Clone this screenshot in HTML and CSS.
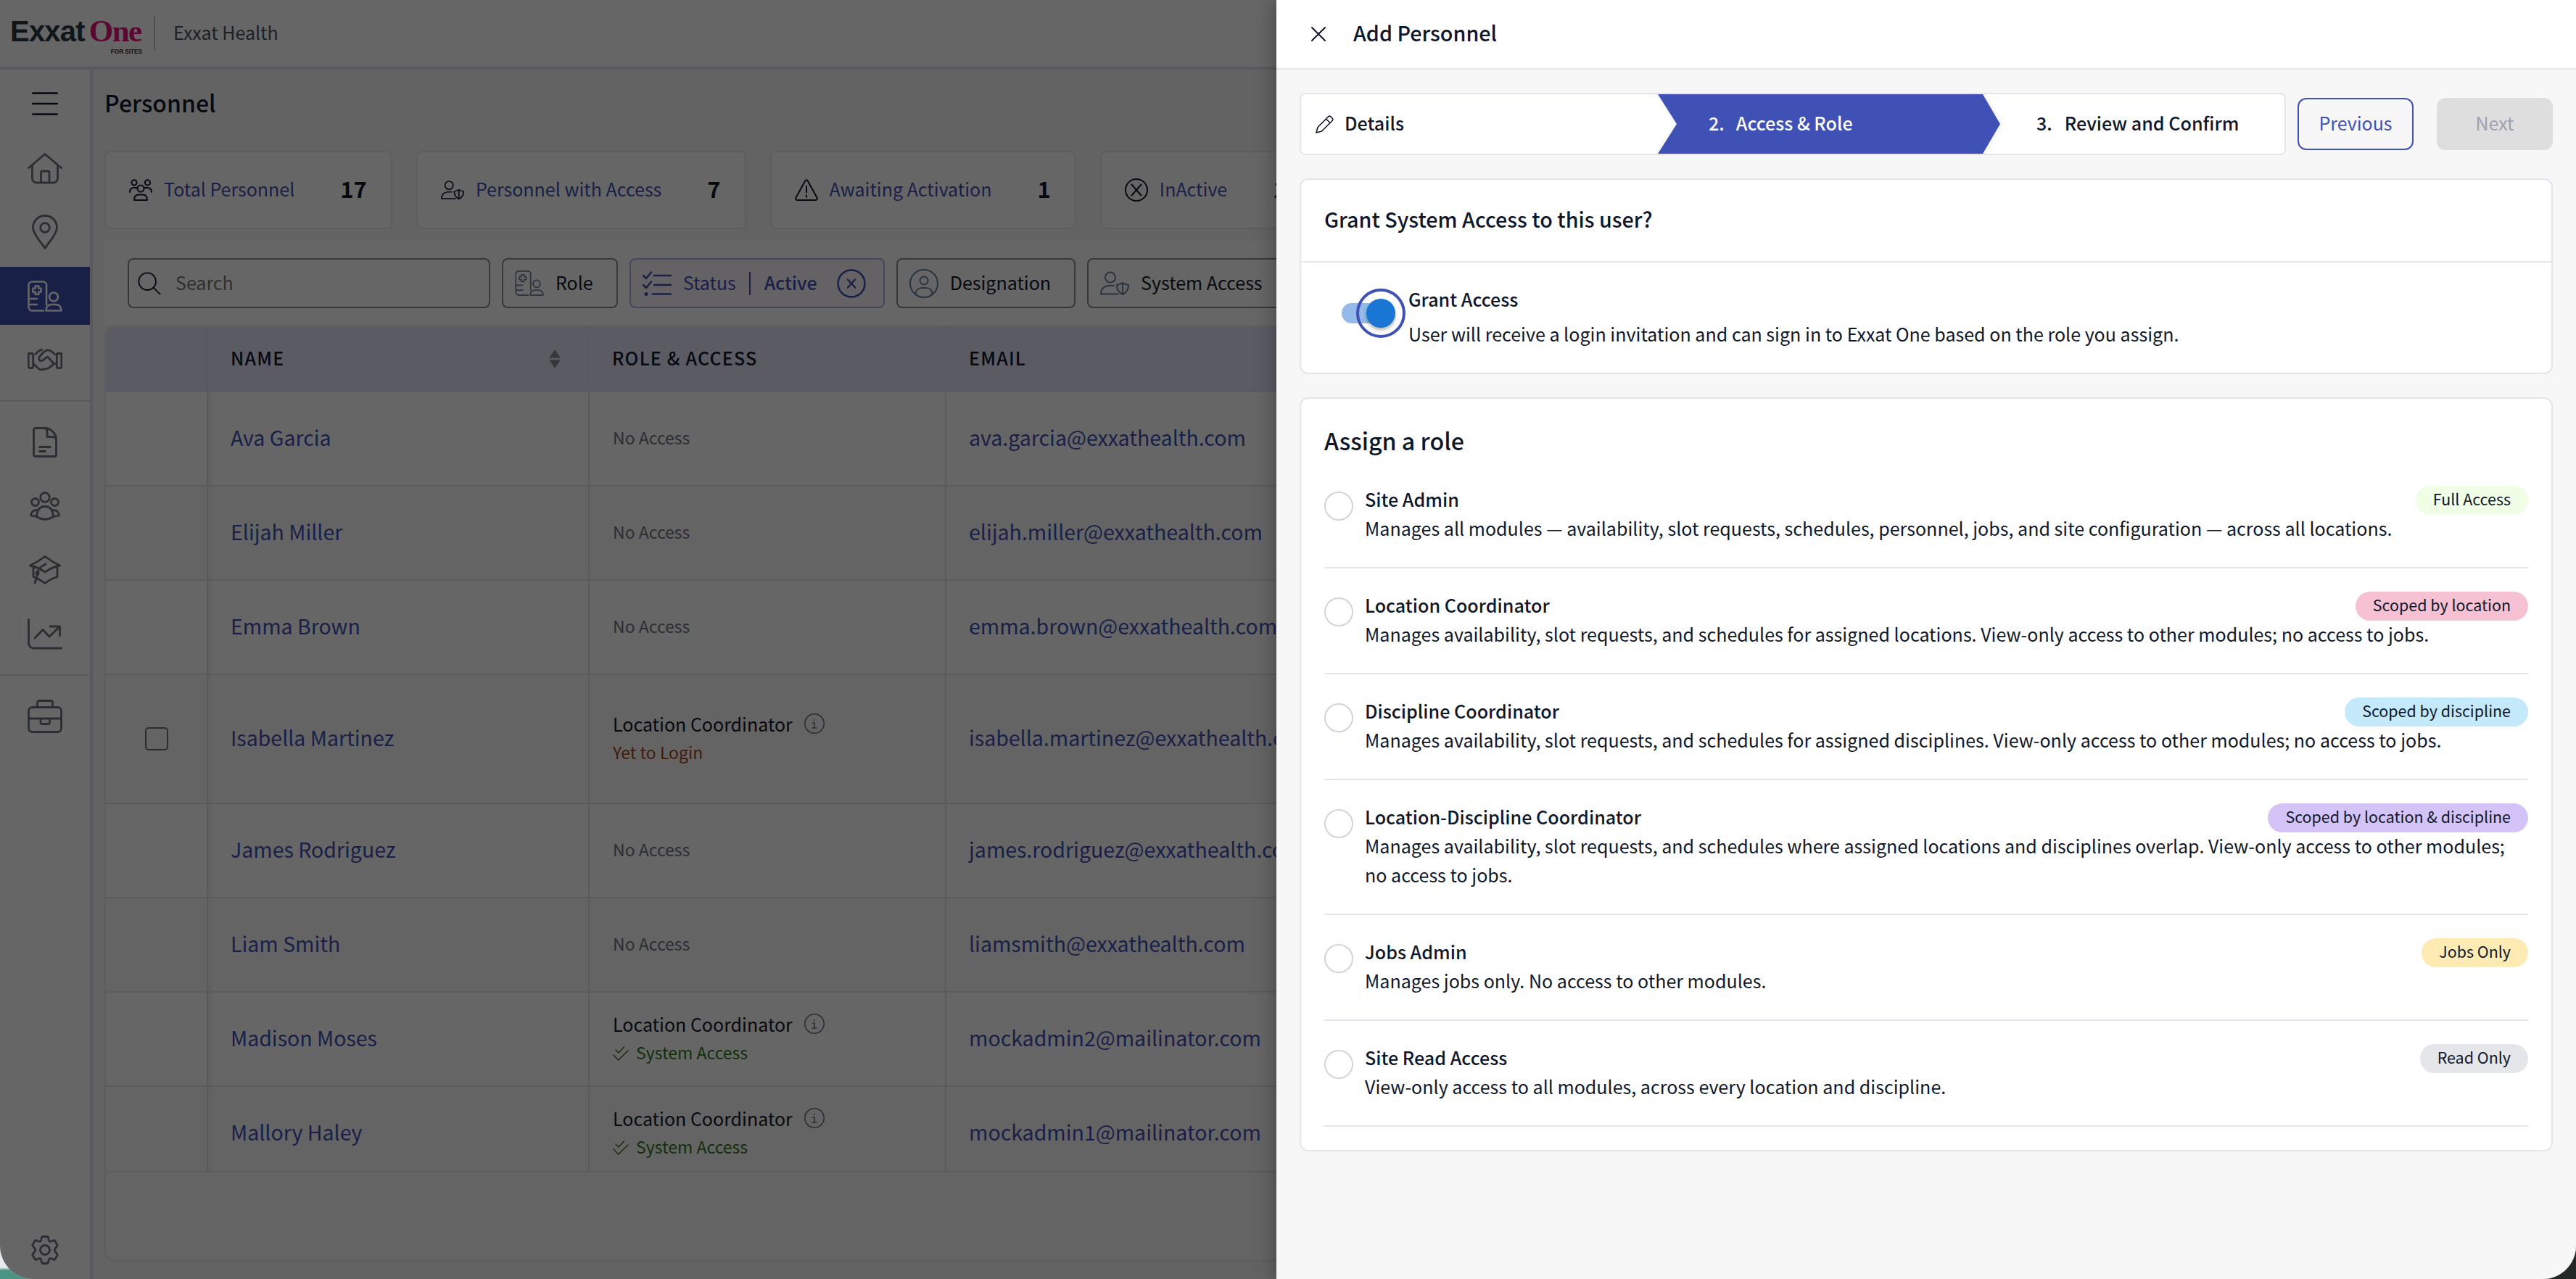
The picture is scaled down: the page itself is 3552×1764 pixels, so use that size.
FILE: index.html
```html
<!DOCTYPE html>
<html lang="en">
<head>
	<meta charset="utf-8">
	<meta name="viewport" content="width=device-width, initial-scale=1">
	<title>Exxat One - Add Personnel</title>
	<link rel="stylesheet" href="styles.css">
</head>
<body>
<svg class="sprite" xmlns="http://www.w3.org/2000/svg">
	<symbol id="i-badge" viewBox="0 0 48 43">
		<path d="M26 33V6a4.500 4.500 0 0 0-4.500-4.500h-15A5 5 0 0 0 1.500 6v30.500a5 5 0 0 0 5 5H22M1.500 25H13M1.500 33H13"/>
		<path d="M10.700 7.500h4.600v3.300h3.300v4.800h-3.300v3.300h-4.600v-3.300H7.400v-4.800h3.300z"/>
		<circle cx="36" cy="22.500" r="6"/>
		<path d="M25.500 41.500c0-6 3.500-8.500 8-8.500h5c4.500 0 8 2.500 8 8.500z"/>
	</symbol>
	<symbol id="i-shield-user" viewBox="0 0 40 32">
		<circle cx="14" cy="8" r="7"/>
		<path d="M19 19.500h-7C5 20 1 24 1 31h24"/>
		<path d="M31 15.500c3 2 5 2.500 8 3 0 6-2.500 10.500-8 13-5.500-2.500-8-7-8-13 3-.5 5-1 8-3zv16"/>
	</symbol>
	<symbol id="i-x-circle" viewBox="0 0 40 40">
		<circle cx="20" cy="20" r="18.500"/>
		<path d="m15 14.500 10 11m0-11-10 11"/>
	</symbol>
	<symbol id="i-info" viewBox="0 0 28 28">
		<circle cx="14" cy="14" r="13.200"/>
		<path d="M11.500 13H14v7m-3 0h6M13.800 8.500v1"/>
	</symbol>
	<symbol id="i-checks" viewBox="0 0 22 20">
		<path d="m4 5 4 4 7.500-8M1 12l6.500 7L21 6"/>
	</symbol>
</svg>

<div class="window">
	<header class="topbar">
		<div class="logo">
			<div class="logo-name"><span class="logo-exxat">Exxat</span><span class="logo-one">One</span></div>
			<div class="logo-sub">FOR SITES</div>
		</div>
		<span class="topbar-sep"></span>
		<span class="org">Exxat Health</span>
	</header>

	<div class="shell">
		<nav class="side">
			<a class="side-item menu"><svg width="36" height="32" viewBox="0 0 36 32"><path d="M1 1.500h34M1 16h34M1 30.500h34"/></svg></a>
			<a class="side-item"><svg width="48" height="43" viewBox="0 0 48 43"><path d="M1.500 20.500 24 1.500l22.500 19M6.500 17v18a6 6 0 0 0 6 6h23a6 6 0 0 0 6-6V17M18.500 41V27a2 2 0 0 1 2-2h7.500a2 2 0 0 1 2 2v14"/></svg></a>
			<a class="side-item"><svg width="36" height="48" viewBox="0 0 36 48"><path d="M18 46.500C16 42 1.500 28 1.500 17.500a16.500 16 0 0 1 33 0C34.500 28 20 42 18 46.500z"/><circle cx="18" cy="18" r="6.300"/></svg></a>
			<a class="side-item active"><svg width="48" height="43"><use href="#i-badge"/></svg></a>
			<a class="side-item"><svg width="48" height="31" viewBox="0 0 48 31"><path d="M1.200 6.500h5a1.500 1.500 0 0 1 1.500 1.500v17a1.500 1.500 0 0 1-1.500 1.500h-3A2 2 0 0 1 1.200 24.500zM46.800 6.500h-5a1.500 1.500 0 0 0-1.500 1.500v17a1.500 1.500 0 0 0 1.500 1.500h3a2 2 0 0 0 2-2zM11 7.500c3-3 5-6 9-6M37.500 8c-3-4-7-6.500-11-6-3 1-8 6-10.500 10-1 3 1 5.500 4 4.500 3-1 4.500-4.500 7.500-5.500l7.500 8c1 2 0 4-2.500 5-2 1-3 3.500-5.500 3-2 1.500-4 1.500-5 1-4 2-6 .5-8-1.500l-6-6M35 20.500h5"/></svg></a>
			<hr>
			<a class="side-item"><svg width="34" height="42" viewBox="0 0 34 42"><path d="M4 1.500h13C25 1.500 32.500 9 32.500 17v21.500a2 2 0 0 1-2 2H4a2.500 2.500 0 0 1-2.500-2V4A2.500 2.500 0 0 1 4 1.500zM17 1.500c3 1 3.500 4 3 12h6c4 0 6 1 6.500 3.500M9.500 27.500h15M9.500 33.500h8"/></svg></a>
			<a class="side-item"><svg width="42" height="40" viewBox="0 0 42 40"><circle cx="21" cy="8" r="6.300"/><circle cx="7.500" cy="14.500" r="5"/><circle cx="34.500" cy="14.500" r="5"/><path d="M9.500 34.500C10 25 14 20.500 21 20.500S32 25 32.500 34.500c-7 5-16 5-23 0zM12 25.500c-7-1-10 3-10.500 7.500 2.500 1 5 1 8 1M30 25.500c7-1 10 3 10.500 7.500-2.500 1-5 1-8 1"/></svg></a>
			<a class="side-item"><svg width="44" height="40" viewBox="0 0 44 40"><path d="M22 1.500C16 6 8 11 1.500 14c8 1.500 14 4.500 20.500 9 6.500-4.500 12.500-7.500 20.500-9C36 11 28 6 22 1.500zM6 16.500v13c6 2 11 5 16 9 5-4 11-7 17-9v-13M23 12c-6 3-10 6-11 10l-1 7-3 9"/><circle class="dot" cx="11.500" cy="24.500" r="3"/></svg></a>
			<a class="side-item"><svg width="48" height="43" viewBox="0 0 48 43"><path d="M1.500 1v33a7 7 0 0 0 7 7H47M10 27l11-11.500 9 9.500L44 11.500M31 11h13.500v12.500"/></svg></a>
			<hr>
			<a class="side-item"><svg width="48" height="46" viewBox="0 0 48 46"><rect x="1.500" y="10.500" width="45" height="34" rx="5"/><path d="M13.500 10V4a2.500 2.500 0 0 1 2.500-2.500h16A2.500 2.500 0 0 1 34.500 4v6M1.500 26h45M18 26v5.500a2 2 0 0 0 2 2h8.500a2 2 0 0 0 2-2V26"/></svg></a>
			<a class="side-item gear"><svg width="38" height="40" viewBox="0 0 38 40"><circle cx="19" cy="20" r="6.500"/><path d="M15.500 1.500h7c1.500 0 1.200 6 3 6.800 1.800.9 6-2.800 7-1.400l3.700 6c.8 1.500-4 4.500-4 7.100s4.800 5.600 4 7.100l-3.700 6c-1 1.400-5.200-2.300-7-1.400-1.800.8-1.500 6.800-3 6.800h-7c-1.500 0-1.200-6-3-6.800-1.800-.9-6 2.800-7 1.400l-3.700-6c-.8-1.500 4-4.500 4-7.100s-4.800-5.600-4-7.100l3.700-6c1-1.400 5.200 2.300 7 1.400 1.800-.8 1.500-6.800 3-6.800z"/></svg></a>
		</nav>

		<main class="page">
			<h1>Personnel</h1>
			<div class="stats">
				<div class="stat">
					<svg width="32" height="30" viewBox="0 0 32 30"><circle cx="7" cy="4.800" r="3.600"/><circle cx="25.500" cy="4.800" r="3.600"/><circle cx="16" cy="13" r="4.600"/><path d="M1 18c0-4 2-6 6-6h3M31 18c0-4-2-6-6-6h-3M7 29c0-5 2-7.500 6-7.500h6c4 0 6 2.500 6 7.500z"/></svg>
					<a>Total Personnel</a><b>17</b>
				</div>
				<div class="stat">
					<svg width="32" height="28"><use href="#i-shield-user"/></svg>
					<a>Personnel with Access</a><b>7</b>
				</div>
				<div class="stat">
					<svg width="32" height="30" viewBox="0 0 32 30"><path d="M14.500 2a2 2 0 0 1 3 0l13 23.500c1 2 0 3.500-2 3.500h-25c-2 0-3-1.500-2-3.500zM16 10v8.500M16 22.300v2.400"/></svg>
					<a>Awaiting Activation</a><b>1</b>
				</div>
				<div class="stat">
					<svg width="32" height="32" viewBox="0 0 32 32"><circle cx="16" cy="16" r="15"/><path d="m9.500 8.500 13 15m0-15-13 15"/></svg>
					<a>InActive</a><b>10</b>
				</div>
			</div>

			<div class="toolbar">
				<div class="search">
					<svg width="32" height="32" viewBox="0 0 34 34"><circle cx="14" cy="14" r="12.500"/><path d="m23 23 9.500 9.500"/></svg>
					<span>Search</span>
				</div>
				<div class="filter">
					<svg width="40" height="37"><use href="#i-badge"/></svg><span>Role</span>
				</div>
				<div class="filter on">
					<svg width="40" height="34" viewBox="0 0 40 34"><path d="m1 6 4 4 7-8.500M1 19l4 4 7-8.500M16 6h23M16 19h23M14 31.500h25"/><circle class="dot" cx="5" cy="31.500" r="2.500"/></svg>
					<span>Status</span><i></i><strong>Active</strong>
					<svg width="40" height="40"><use href="#i-x-circle"/></svg>
				</div>
				<div class="filter">
					<svg width="40" height="40" viewBox="0 0 40 40"><circle cx="20" cy="20" r="19"/><circle cx="20" cy="16" r="5.500"/><path d="M8.500 35c0-6 4-9 9-9h5c5 0 9 3 9 9"/></svg>
					<span>Designation</span>
				</div>
				<div class="filter">
					<svg width="40" height="33"><use href="#i-shield-user"/></svg><span>System Access</span>
				</div>
			</div>

			<div class="table">
				<div class="tr th">
					<div></div>
					<div>NAME<svg class="sort" width="16" height="26" viewBox="0 0 16 26"><path d="M8 1.500 14.500 11h-13zM8 24.500 14.500 15h-13z"/></svg></div>
					<div>ROLE &amp; ACCESS</div>
					<div>EMAIL</div>
				</div>
				<div class="tr"><div></div><div>Ava Garcia</div><div class="role"><span class="none">No Access</span></div><div>ava.garcia@exxathealth.com</div></div>
				<div class="tr alt"><div></div><div>Elijah Miller</div><div class="role"><span class="none">No Access</span></div><div>elijah.miller@exxathealth.com</div></div>
				<div class="tr"><div></div><div>Emma Brown</div><div class="role"><span class="none">No Access</span></div><div>emma.brown@exxathealth.com</div></div>
				<div class="tr alt tall">
					<div><span class="checkbox"></span></div><div>Isabella Martinez</div>
					<div class="role"><p>Location Coordinator<svg width="28" height="28"><use href="#i-info"/></svg></p><p class="pending">Yet to Login</p></div>
					<div>isabella.martinez@exxathealth.com</div>
				</div>
				<div class="tr"><div></div><div>James Rodriguez</div><div class="role"><span class="none">No Access</span></div><div>james.rodriguez@exxathealth.com</div></div>
				<div class="tr alt"><div></div><div>Liam Smith</div><div class="role"><span class="none">No Access</span></div><div>liamsmith@exxathealth.com</div></div>
				<div class="tr">
					<div></div><div>Madison Moses</div>
					<div class="role"><p>Location Coordinator<svg width="28" height="28"><use href="#i-info"/></svg></p><p class="granted"><svg width="22" height="20"><use href="#i-checks"/></svg>System Access</p></div>
					<div>mockadmin2@mailinator.com</div>
				</div>
				<div class="tr alt cut">
					<div></div><div>Mallory Haley</div>
					<div class="role"><p>Location Coordinator<svg width="28" height="28"><use href="#i-info"/></svg></p><p class="granted"><svg width="22" height="20"><use href="#i-checks"/></svg>System Access</p></div>
					<div>mockadmin1@mailinator.com</div>
				</div>
			</div>
		</main>
	</div>

	<div class="overlay"></div>

	<aside class="drawer">
		<div class="drawer-head">
			<svg width="20" height="20" viewBox="0 0 20 20"><path d="m1 1 18 18M19 1 1 19"/></svg>
			<h2>Add Personnel</h2>
		</div>
		<div class="drawer-body">
			<div class="steps-row">
				<div class="steps">
					<div class="step first">
						<svg width="25" height="25" viewBox="0 0 25 25"><path d="M1 24 3 16.500 17.500 2a2.500 2.500 0 0 1 3.500 0l2 2a2.500 2.500 0 0 1 0 3.500L8.500 22zM14.500 5l5.500 5.500"/></svg>
						<span>Details</span>
					</div>
					<div class="step-arrow"><div class="step current"><span>2.</span><span>Access &amp; Role</span></div></div>
					<div class="step last"><span>3.</span><span>Review and Confirm</span></div>
				</div>
				<button class="btn prev">Previous</button>
				<button class="btn next">Next</button>
			</div>

			<section class="card">
				<h2 class="card-head">Grant System Access to this user?</h2>
				<div class="grant">
					<span class="switch"><span class="thumb"></span></span>
					<div>
						<h4>Grant Access</h4>
						<p>User will receive a login invitation and can sign in to Exxat One based on the role you assign.</p>
					</div>
				</div>
			</section>

			<section class="card roles">
				<h3>Assign a role</h3>
				<div class="option">
					<span class="radio"></span>
					<div class="option-text">
						<div class="option-top"><h4>Site Admin</h4><span class="tag green">Full Access</span></div>
						<p>Manages all modules — availability, slot requests, schedules, personnel, jobs, and site configuration — across all locations.</p>
					</div>
				</div>
				<div class="option">
					<span class="radio"></span>
					<div class="option-text">
						<div class="option-top"><h4>Location Coordinator</h4><span class="tag pink">Scoped by location</span></div>
						<p>Manages availability, slot requests, and schedules for assigned locations. View-only access to other modules; no access to jobs.</p>
					</div>
				</div>
				<div class="option">
					<span class="radio"></span>
					<div class="option-text">
						<div class="option-top"><h4>Discipline Coordinator</h4><span class="tag blue">Scoped by discipline</span></div>
						<p>Manages availability, slot requests, and schedules for assigned disciplines. View-only access to other modules; no access to jobs.</p>
					</div>
				</div>
				<div class="option">
					<span class="radio"></span>
					<div class="option-text">
						<div class="option-top"><h4>Location-Discipline Coordinator</h4><span class="tag purple">Scoped by location &amp; discipline</span></div>
						<p>Manages availability, slot requests, and schedules where assigned locations and disciplines overlap. View-only access to other modules;<br>no access to jobs.</p>
					</div>
				</div>
				<div class="option">
					<span class="radio"></span>
					<div class="option-text">
						<div class="option-top"><h4>Jobs Admin</h4><span class="tag yellow">Jobs Only</span></div>
						<p>Manages jobs only. No access to other modules.</p>
					</div>
				</div>
				<div class="option">
					<span class="radio"></span>
					<div class="option-text">
						<div class="option-top"><h4>Site Read Access</h4><span class="tag grey">Read Only</span></div>
						<p>View-only access to all modules, across every location and discipline.</p>
					</div>
				</div>
			</section>
		</div>
	</aside>
</div>
</body>
</html>
```
FILE: styles.css
```css
*{box-sizing: border-box;}
body{margin: 0;font-family: 'Noto Sans CJK SC', sans-serif;font-size: 25px;color: #0f172a;background: linear-gradient(90deg, transparent 50%, #232927 50%), linear-gradient(#e6ebf0 1748px, #4c9584 1752px);}
h1, h2, h3, h4, p{margin: 0;font-weight: 500;}
svg{flex: none;fill: none;stroke: currentColor;stroke-width: 2;stroke-linecap: round;stroke-linejoin: round;}
.sprite{position: absolute;width: 0;height: 0;}
.dot{fill: currentColor;stroke: none;}
.window{position: relative;height: 1764px;overflow: hidden;border-radius: 0 0 46px 46px;background: #fff;}

.topbar{display: flex;align-items: center;height: 96px;border-bottom: 4px solid #e2e2ec;}
.logo{width: 196px;padding: 5px 0 0 14px;}
.logo-name{display: flex;gap: 6px;align-items: baseline;line-height: 44px;white-space: nowrap;}
.logo-exxat{font: bold 40px/44px 'Liberation Sans', sans-serif;letter-spacing: -0.8px;color: #2a3b45;}
.logo-one{font: bold 43px/44px 'Liberation Serif', serif;letter-spacing: -1.5px;color: #e5127a;}
.logo-sub{font: bold 8.2px/10px 'Liberation Sans', sans-serif;text-align: right;color: #222;margin-top: 2px;}
.topbar-sep{width: 2px;height: 46px;background: #c4c6d4;margin: 0 25px 0 16px;}
.org{padding-bottom: 4px;color: #475063;}

.shell{display: flex;height: 1668px;}
.side{display: flex;flex-direction: column;gap: 8px;width: 128px;border-right: 4px solid #e2e2ec;color: #6b7280;}
.side-item{display: flex;align-items: center;justify-content: center;height: 80px;}
.side-item svg{stroke-width: 2.8;}
.menu{height: 88px;padding-top: 5px;color: #0f172a;}
.menu svg{stroke-width: 2.4;}
.active{background: #3f51b5;color: #fff;}
.active svg{stroke-width: 2.6;}
.side hr{width: 100%;height: 2px;border: none;background: #e2e2ec;margin: 8px 0;}
.gear{margin-top: auto;}

.page{flex: 1;min-width: 0;overflow: hidden;padding: 0 0 0 16px;background: #f7f7f7;}
h1{font-size: 32px;line-height: 90px;margin-bottom: 22px;}
.stats{display: flex;gap: 33px;}
.stat{display: flex;align-items: center;flex: none;height: 108px;padding: 0 33px 0 32px;border: 2px solid #e9e9ec;border-radius: 8px;background: #fff;}
.stat a{margin-left: 16px;padding-bottom: 4px;color: #3f51b5;white-space: nowrap;}
.stat b{margin-left: 63px;padding-bottom: 6px;font-size: 31px;}

.toolbar{display: flex;gap: 16px;width: 3400px;height: 117px;margin-top: 16px;padding: 24px 32px;background: #fff;}
.search, .filter{display: flex;align-items: center;flex: none;height: 69px;padding: 0 14px 0 12px;border: 2px solid #8c8c8c;border-radius: 8px;}
.search{width: 500px;}
.search span{margin-left: 20px;padding-bottom: 3px;color: #757575;}
.filter{padding: 0 32px 0 16px;}
.filter svg{color: #64829f;}
.filter span{margin-left: 16px;padding-bottom: 4px;white-space: nowrap;}
.filter.on{padding-right: 24px;border-color: #a7b1de;background: #fdf5ff;color: #3f51b5;}
.filter.on svg{color: #3f51b5;stroke-width: 2.5;}
.filter.on i{width: 2px;height: 32px;margin: 0 19px 0 18px;background: #3f51b5;}
.filter.on strong{margin-right: 27px;padding-bottom: 4px;font-weight: 500;}

.table{width: 3400px;height: 1291px;overflow: hidden;border: 2px solid #e9e9ee;border-radius: 16px;background: #f9f9f9;}
.tr{display: grid;grid-template-columns: 141px 526px 492px 1fr;height: 130px;border-bottom: 2px solid #e4e4ea;background: #fff;color: #3f51b5;font-size: 28.500px;}
.tr > div{display: flex;align-items: center;padding: 0 32px 5px 31px;border-right: 2px solid #e4e4ea;}
.tr > div:first-child{justify-content: center;padding: 0;border-right-color: #dcdcea;}
.tr > div:nth-child(2){background: linear-gradient(90deg, #eeeef8, transparent 8px);}
.alt{background: #fbfbfb;}
.tall{height: 178px;}
.cut{height: 118px;overflow: hidden;}
.cut > div{height: 128px;}
.th{height: 90px;background: #e4e4fb;color: #0f172a;font-size: 25px;font-weight: 500;letter-spacing: 1.200px;}
.th > div:nth-child(2){background: none;}
.sort{margin: 5px 6px 0 auto;color: #8b8b92;}
.sort path{fill: currentColor;stroke-width: 1.500;}
.tr .role{flex-direction: column;align-items: flex-start;justify-content: center;padding-left: 32px;padding-bottom: 3px;font-size: 25px;line-height: 39px;}
.role p{display: flex;align-items: center;font-weight: 400;color: #0f172a;}
.role p svg{margin-left: 16px;color: #6b7280;stroke-width: 1.600;}
.none{font-size: 23px;color: #6b7280;}
.role .pending{font-size: 23px;color: #a8441f;}
.role .granted{font-size: 23px;color: #2e7518;}
.role .granted svg{margin: 4px 10px 0 0;color: inherit;stroke-width: 1.500;}
.checkbox{width: 32px;height: 32px;border: 2px solid #6b6b70;border-radius: 5px;}

.overlay{position: absolute;inset: 0;background: rgba(0, 0, 0, 0.6);}
.drawer{position: absolute;top: 0;right: 0;bottom: 0;width: 1792px;background: #f7f7f7;box-shadow: 0 0 28px rgba(0, 0, 0, 0.35);}
.drawer-head{display: flex;align-items: center;gap: 38px;height: 96px;padding-left: 48px;border-bottom: 2px solid #e5e5ea;background: #fff;}
.drawer h2{padding-bottom: 5px;font-size: 28.700px;}
.drawer h4{font-size: 25.100px;line-height: 40px;}
.drawer p{font-size: 25.050px;font-weight: 400;line-height: 40px;white-space: nowrap;}
.drawer-body{padding: 32px;}
.steps-row{display: flex;align-items: center;}
.steps{display: flex;width: 1360px;height: 86px;overflow: hidden;border: 2px solid #e5e5ec;border-radius: 8px;background: #fff;font-size: 25.100px;font-weight: 500;}
.step{display: flex;align-items: center;height: 100%;}
.step svg{stroke-width: 1.600;}
.step span{padding-bottom: 4px;white-space: pre;}
.first{width: 488px;padding-left: 20px;gap: 15px;}
.step-arrow{width: 481px;padding: 0 5px 0 4px;background: #f7f7f7;clip-path: polygon(0 0, calc(100% - 25px) 0, 100% 50%, calc(100% - 25px) 100%, 0 100%, 26px 50%);}
.current{gap: 16px;padding-left: 70px;background: #3f51b5;color: #fff;clip-path: polygon(0 0, calc(100% - 24px) 0, 100% 50%, calc(100% - 24px) 100%, 0 100%, 26px 50%);}
.last{gap: 17px;padding-left: 45px;}
.btn{width: 160px;height: 72px;padding: 0 0 4px;border: 2px solid #3f51b5;border-radius: 12px;background: none;color: #3f51b5;font: inherit;}
.prev{margin-left: 16px;}
.next{margin-left: 32px;border-color: #dedede;background: #dedede;color: #9ca3af;}

.card{margin-top: 32px;border: 2px solid #e5e5ec;border-radius: 12px;background: #fff;}
.card .card-head{display: flex;align-items: center;height: 114px;padding: 0 32px 5px;border-bottom: 2px solid #e5e5ec;}
.grant{display: flex;height: 152px;padding: 30px 32px 0 56px;}
.grant p{margin-top: 8px;}
.switch{position: relative;width: 58px;height: 28px;margin: 26px 34px 0 0;border-radius: 14px;background: #94bae9;}
.thumb{position: absolute;left: 20px;top: -20px;width: 68px;height: 68px;border: 4px solid #3f51b5;border-radius: 50%;}
.thumb::before{content: '';position: absolute;left: 10px;top: 10px;width: 40px;height: 40px;border-radius: 50%;background: #1976d2;box-shadow: 0 3px 4px rgba(0, 0, 0, 0.3);}
.roles{padding: 33px 32px 32px;}
.roles h3{margin-bottom: 7px;font-size: 32.200px;line-height: 48px;}
.option{display: flex;gap: 16px;padding: 30px 0 34px;border-bottom: 2px solid #e5e5ec;}
.radio{flex: none;width: 40px;height: 40px;margin-top: 10px;border: 2px solid #d1d5db;border-radius: 50%;}
.option-text{flex: 1;}
.option-top{display: flex;justify-content: space-between;height: 40px;}
.tag{height: 40px;margin-top: 2px;padding: 0 24px;border-radius: 20px;font-size: 21.450px;line-height: 36px;}
.green{background: #f1fee6;}
.pink{background: #f5c1d3;}
.blue{background: #c4e9fb;}
.purple{background: #d3c3f6;}
.yellow{background: #feebb4;}
.grey{background: #e5e6ea;}
```
